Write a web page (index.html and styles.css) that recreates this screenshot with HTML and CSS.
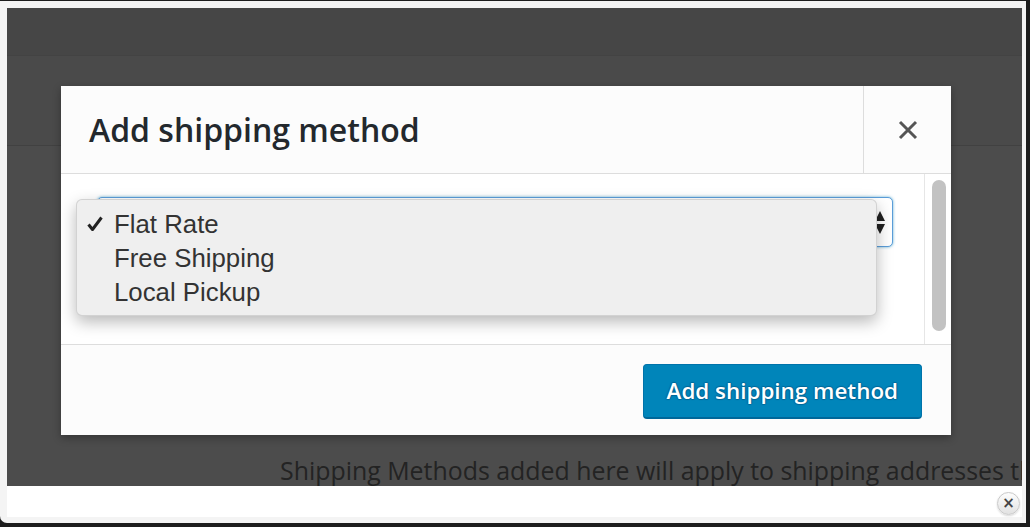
FILE: index.html
```html
<!DOCTYPE html>
<html lang="en">
<head>
<meta charset="utf-8">
<title>Add shipping method</title>
<link rel="stylesheet" href="styles.css">
</head>
<body>
<div class="window">
  <div class="screen">
    <div class="stage">
      <div class="band band-top"></div>
      <div class="band band-mid"></div>
      <div class="page">
        <p class="page-text">Shipping Methods added here will apply to shipping addresses that are within this zone.</p>
      </div>

      <div class="modal">
        <div class="modal-header">
          <h1 class="modal-title">Add shipping method</h1>
          <button class="modal-close" type="button" aria-label="Close">
            <svg width="20" height="20" viewBox="0 0 20 20"><path d="M2 2 L18 18 M18 2 L2 18" stroke="#555" stroke-width="3" fill="none"/></svg>
          </button>
        </div>
        <div class="modal-body">
          <div class="modal-content">
            <div class="select">
              <svg class="select-arrows" width="10" height="23" viewBox="0 0 10 23"><path d="M5 0 L10 10 L0 10 Z M0 13 L10 13 L5 23 Z" fill="#222"/></svg>
            </div>
            <ul class="popup">
              <li class="option checked"><span class="check"><svg width="16" height="16" viewBox="0 0 16 16"><path d="M1.5 8.5 L5.5 13.5 L14.5 1.5" stroke="#222" stroke-width="3" fill="none" stroke-linejoin="round"/></svg></span>Flat Rate</li>
              <li class="option"><span class="check"></span>Free Shipping</li>
              <li class="option"><span class="check"></span>Local Pickup</li>
            </ul>
          </div>
          <div class="scrollbar"><div class="thumb"></div></div>
        </div>
        <div class="modal-footer">
          <button class="btn-primary" type="button">Add shipping method</button>
        </div>
      </div>
    </div>
    <div class="notice">
      <span class="dismiss">×</span>
    </div>
  </div>
</div>
</body>
</html>
```

FILE: styles.css
```css
* { box-sizing: border-box; }

html, body {
  margin: 0;
  padding: 0;
}

body {
  width: 1030px;
  height: 527px;
  overflow: hidden;
  background: #1d1d1d;
  font-family: "Open Sans", "Liberation Sans", sans-serif;
}

.window {
  width: 1026px;
  height: 522px;
  margin-top: 1px;
  background: #f4f4f4;
  border-radius: 0 0 0 7px;
  padding: 7px 4px 6px 7px;
}

.screen {
  display: flex;
  flex-direction: column;
  width: 1015px;
  height: 509px;
}

.stage {
  position: relative;
  height: 478px;
  background: #4c4c4c;
  overflow: hidden;
  display: flex;
  flex-direction: column;
}

.band-top {
  height: 48px;
  background: #464646;
}

.band-mid {
  height: 93px;
  background: #4a4a4a;
  border-top: 1px solid #434343;
  border-bottom: 1px solid #414141;
}

.page {
  padding-left: 273px;
}

.page-text {
  margin: 308px 0 0;
  font-size: 24.9px;
  line-height: 32px;
  color: #232323;
  white-space: nowrap;
}

/* Modal */
.modal {
  position: absolute;
  left: 54px;
  top: 78px;
  width: 890px;
  height: 349px;
  background: #fff;
  display: flex;
  flex-direction: column;
  box-shadow: 0 3px 8px rgba(0, 0, 0, 0.3);
}

.modal-header {
  height: 88px;
  display: flex;
  align-items: center;
  background: #fcfcfc;
  border-bottom: 1px solid #dddddd;
}

.modal-title {
  flex: 1;
  margin: 0;
  padding-left: 28px;
  font-size: 32px;
  line-height: 1;
  font-weight: 600;
  color: #23282d;
}

.modal-close {
  width: 88px;
  height: 100%;
  border: 0;
  border-left: 1px solid #dddddd;
  background: transparent;
  padding: 0;
  display: flex;
  align-items: center;
  justify-content: center;
}

.modal-close svg {
  margin-top: 1px;
}

.modal-body {
  height: 170px;
  display: flex;
  background: #fff;
}

.modal-content {
  flex: 1;
  position: relative;
}

.select {
  position: absolute;
  left: 36px;
  top: 23px;
  width: 796px;
  height: 50px;
  background: #fff;
  border: 1px solid #5b9dd9;
  border-radius: 5px;
  box-shadow: 0 0 3px rgba(30, 140, 190, 0.7);
}

.select-arrows {
  position: absolute;
  right: 7px;
  top: 13px;
}

.popup {
  position: absolute;
  left: 15px;
  top: 25px;
  width: 801px;
  height: 117px;
  margin: 0;
  padding: 7px 0;
  list-style: none;
  background: #efefef;
  border-radius: 6px;
  border: 1px solid rgba(0, 0, 0, 0.12);
  box-shadow: 0 6px 16px rgba(0, 0, 0, 0.28);
  font-family: "Liberation Sans", Arial, sans-serif;
  font-size: 25.8px;
  color: #333;
}

.option {
  display: flex;
  align-items: center;
  height: 34px;
  line-height: 34px;
}

.check {
  width: 37px;
  padding-left: 10px;
  display: flex;
  align-items: center;
}

.scrollbar {
  width: 27px;
  border-left: 1px solid #e6e6e6;
  padding: 6px 5px 0 7px;
}

.thumb {
  height: 151px;
  border-radius: 7px;
  background: #c2c2c2;
}

.modal-footer {
  flex: 1;
  display: flex;
  justify-content: flex-end;
  align-items: flex-start;
  padding: 19px 29px 0 0;
  background: #fcfcfc;
  border-top: 1px solid #dddddd;
}

.btn-primary {
  height: 55px;
  padding: 0 23px 2px;
  font-family: "Open Sans", "Liberation Sans", sans-serif;
  font-size: 22.4px;
  font-weight: 600;
  color: #fff;
  background: #0085ba;
  border: 1px solid #0073aa;
  border-bottom: 2px solid #006799;
  border-radius: 4px;
  text-shadow: 0 -1px 1px #006799, 1px 0 1px #006799, 0 1px 1px #006799, -1px 0 1px #006799;
}

/* Notice bar */
.notice {
  height: 31px;
  background: #fff;
  display: flex;
  align-items: center;
  justify-content: flex-end;
  padding-right: 2px;
}

.dismiss {
  width: 23px;
  height: 23px;
  border-radius: 50%;
  border: 1px solid #c9c9c9;
  background: linear-gradient(#fdfdfd, #e2e2e2);
  box-shadow: 0 1px 2px rgba(0, 0, 0, 0.15);
  display: flex;
  align-items: center;
  justify-content: center;
  font-family: "DejaVu Sans", sans-serif;
  font-size: 15px;
  font-weight: bold;
  line-height: 1;
  color: #444;
  margin-top: 3px;
}
```
